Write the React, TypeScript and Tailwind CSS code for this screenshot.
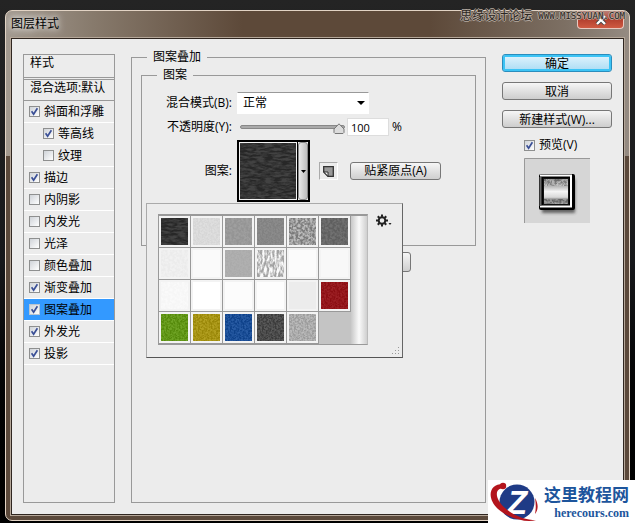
import { useState } from "react";

type Style = {
  name: string;
  checked: boolean;
  indent?: boolean;
  active?: boolean;
};

type Pattern = {
  name: string;
  fill: string;
  grain?: number; // noise opacity
  freq?: "fine" | "lines" | "cloth" | "bark";
};

const styles: Style[] = [
  { name: "斜面和浮雕", checked: true },
  { name: "等高线", checked: true, indent: true },
  { name: "纹理", checked: false, indent: true },
  { name: "描边", checked: true },
  { name: "内阴影", checked: false },
  { name: "内发光", checked: false },
  { name: "光泽", checked: false },
  { name: "颜色叠加", checked: false },
  { name: "渐变叠加", checked: true },
  { name: "图案叠加", checked: true, active: true },
  { name: "外发光", checked: true },
  { name: "投影", checked: true },
];

const patterns: Pattern[] = [
  { name: "dark-weave", fill: "#2c2c2c", grain: 0.1, freq: "lines" },
  { name: "paper-light", fill: "#dedede", grain: 0.03, freq: "fine" },
  { name: "gray-smooth", fill: "#9b9b9b", grain: 0.04, freq: "cloth" },
  { name: "gray-flat", fill: "#878787", grain: 0.04, freq: "fine" },
  { name: "gray-rough", fill: "#a4a4a4", grain: 0.25, freq: "cloth" },
  { name: "gray-dark", fill: "#666666", grain: 0.07, freq: "cloth" },
  { name: "paper-1", fill: "#f1f1f1", grain: 0.02, freq: "cloth" },
  { name: "paper-2", fill: "#fafafa" },
  { name: "gray-mid", fill: "#afafaf", grain: 0.02, freq: "fine" },
  { name: "bark", fill: "#fafafa", grain: 0.35, freq: "bark" },
  { name: "paper-3", fill: "#fbfbfb" },
  { name: "paper-4", fill: "#f8f8f8" },
  { name: "paper-5", fill: "#fafafa", grain: 0.01, freq: "cloth" },
  { name: "white-1", fill: "#ffffff" },
  { name: "white-2", fill: "#fcfcfc" },
  { name: "white-3", fill: "#fdfdfd" },
  { name: "plain", fill: "#ececec" },
  { name: "red", fill: "#960f14", grain: 0.07, freq: "fine" },
  { name: "green", fill: "#5f9a0c", grain: 0.1, freq: "fine" },
  { name: "yellow", fill: "#ab9608", grain: 0.1, freq: "fine" },
  { name: "blue", fill: "#10499a", grain: 0.1, freq: "fine" },
  { name: "charcoal", fill: "#434343", grain: 0.12, freq: "fine" },
  { name: "silver", fill: "#b2b2b2", grain: 0.12, freq: "fine" },
];

const frequencies = {
  fine: "0.55",
  lines: "0.12 0.5",
  cloth: "0.42",
  bark: "0.5 0.17",
};

const noiseIds = {
  fine: "url(#noise-fine)",
  lines: "url(#noise-lines)",
  cloth: "url(#noise-cloth)",
  bark: "url(#noise-bark)",
};

function NoiseFilters() {
  return (
    <svg width="0" height="0" className="absolute" aria-hidden="true">
      {Object.entries(frequencies).map(([key, value]) => (
        <filter key={key} id={`noise-${key}`} x="0" y="0" width="1" height="1" colorInterpolationFilters="sRGB">
          <feTurbulence type="fractalNoise" baseFrequency={value} numOctaves={3} seed={4} />
          <feColorMatrix values="3 0 0 0 -1  3 0 0 0 -1  3 0 0 0 -1  0 0 0 0 1" />
        </filter>
      ))}
    </svg>
  );
}

function Texture({ pattern, size }: { pattern: Pattern; size: number }) {
  return (
    <svg width={size} height={size} className="block" aria-hidden="true">
      <rect width={size} height={size} fill={pattern.fill} />
      {pattern.freq && (
        <rect width={size} height={size} filter={noiseIds[pattern.freq]} opacity={pattern.grain} />
      )}
    </svg>
  );
}

function Tick({ label, checked, active }: { label: string; checked: boolean; active?: boolean }) {
  return (
    <label className="flex items-center gap-1">
      <span className="grid">
        <input
          type="checkbox"
          defaultChecked={checked}
          className={`peer size-[11px] appearance-none border [grid-area:1/1] ${
            active ? "border-[#b9c4d0]" : "border-[#8e8f8f]"
          } bg-linear-to-br from-[#cfd3d8] to-white`}
        />
        <svg viewBox="0 0 11 11" className="pointer-events-none hidden size-[11px] [grid-area:1/1] peer-checked:block">
          <path d="M2.6 5.2 4.6 8.2 8.4 2.2" fill="none" stroke="#3a4f96" strokeWidth="1.7" />
        </svg>
      </span>
      {label}
    </label>
  );
}

function StyleList() {
  return (
    <aside className="w-[92px] shrink-0 border border-[#999]">
      <h2 className="h-[23px] border-b border-[#999] px-1.5 leading-4">样式</h2>
      <button className="mt-px block h-[22px] w-full border-y border-[#999] pb-1 pl-1.5 text-left leading-4 whitespace-nowrap">
        混合选项:默认
      </button>
      <ul>
        {styles.map((s) => (
          <li
            key={s.name}
            className={`flex h-[22px] items-center border-b border-white ${s.indent ? "pl-[19px]" : "pl-[5px]"} ${
              s.active ? "bg-[#3399ff]" : ""
            }`}
          >
            <Tick label={s.name} checked={s.checked} active={s.active} />
          </li>
        ))}
      </ul>
    </aside>
  );
}

function PatternPicker() {
  return (
    <div className="absolute top-full -left-[91px] mt-px flex w-[257px] items-start gap-2 border border-t-[#aaa] border-r-[#666] border-b-[#555] border-l-[#aaa] bg-[#ececec] pt-2.5 pr-2 pb-3 pl-[11px]">
      <div className="flex shrink-0 border border-t-2 border-[#999] border-r-[#bbb] bg-[#c4c4c4]">
        <div className="grid grid-cols-6 content-start">
          {patterns.map((p) => (
            <button key={p.name} aria-label={p.name} className="size-8 border-r border-b border-[#999] bg-[#f3f3f3] p-0.5">
              <Texture pattern={p} size={27} />
            </button>
          ))}
        </div>
        <div className="w-4 bg-linear-to-r from-[#c8c8c8] via-[#fafafa] to-[#cfcfcf]" />
      </div>
      <button aria-label="图案菜单" className="flex shrink-0 items-end">
        <svg width="16" height="13" viewBox="0 0 16 13">
          <circle cx="6" cy="6.5" r="3.3" fill="none" stroke="#222" strokeWidth="2" />
          {[0, 45, 90, 135, 180, 225, 270, 315].map((a) => (
            <rect key={a} x="5" y="0.5" width="2" height="2.4" fill="#222" transform={`rotate(${a} 6 6.5)`} />
          ))}
          <path d="M12.5 9h3l-1.5 2z" fill="#222" />
        </svg>
      </button>
      {/* resize grip */}
      <svg width="8" height="8" className="absolute right-0.5 bottom-0.5" fill="#999">
        <path d="M6 0h1v1h-1zM3 3h1v1h-1zM6 3h1v1h-1zM0 6h1v1h-1zM3 6h1v1h-1zM6 6h1v1h-1z" />
      </svg>
    </div>
  );
}

function OpacitySlider() {
  const [value, setValue] = useState(100);

  return (
    <div className="flex items-center">
      <div className="relative ml-[3px] flex h-4 w-[105px] items-center">
        <input
          id="opacity"
          type="range"
          value={value}
          onChange={(e) => setValue(Number(e.target.value))}
          className="h-1 w-full appearance-none rounded-full border border-[#888] bg-[#aaa] [&::-webkit-slider-thumb]:size-3 [&::-webkit-slider-thumb]:appearance-none [&::-webkit-slider-thumb]:bg-transparent"
        />
        <svg
          width="12"
          height="11"
          className="pointer-events-none absolute top-1"
          style={{ left: `${value * 0.93}px` }}
        >
          <path d="M6 .8 11 6v3.5l-1 1H2l-1-1V6z" fill="#dcdcdc" stroke="#777" />
        </svg>
      </div>
      <input
        aria-label="不透明度百分比"
        value={value}
        onChange={(e) => setValue(Number(e.target.value) || 0)}
        className="ml-0.5 h-[18px] w-[42px] border border-[#ddd] bg-white px-[3px] text-[11px]"
      />
      <span className="ml-[3px]">%</span>
    </div>
  );
}

function PatternOverlay() {
  return (
    <fieldset className="-mt-1.5 min-w-0 flex-1 border border-[#999] px-[9px]">
      <legend className="ml-1.5 px-1.5 leading-[18px]">图案叠加</legend>
      <fieldset className="min-w-0 border border-[#999] pb-[43px]">
        <legend className="ml-[15px] px-1.5 leading-[18px]">图案</legend>
        <div className="grid grid-cols-[90px_1fr] items-center gap-x-[5px] gap-y-1 pt-2 whitespace-nowrap">
          <label htmlFor="blend" className="text-right">混合模式(B):</label>
          <div className="grid w-[132px] items-center">
            <select
              id="blend"
              className="h-[22px] appearance-none border border-white border-t-[#999] bg-white px-[5px] [grid-area:1/1]"
            >
              <option>正常</option>
              <option>溶解</option>
              <option>正片叠底</option>
            </select>
            <svg width="8" height="4" className="pointer-events-none mr-1 justify-self-end [grid-area:1/1]">
              <path d="M0 0h8L4 4z" />
            </svg>
          </div>

          <label htmlFor="opacity" className="text-right">不透明度(Y):</label>
          <OpacitySlider />

          <span className="text-right">图案:</span>
          <div className="relative flex items-center">
            <button aria-label="选择图案" className="flex h-[62px] w-[73px] border-2 border-black bg-[#f4f4f4]">
              <span className="flex h-full flex-1 items-center justify-center border-r border-black">
                <Texture pattern={patterns[0]} size={56} />
              </span>
              <span className="flex h-full w-[10px] items-center justify-center rounded-[3px] border border-[#888] bg-linear-to-r from-[#e8e8e8] to-[#bdbdbd]">
                <svg width="5" height="3"><path d="M0 0h5L2.5 3z" /></svg>
              </span>
            </button>
            <button
              aria-label="新建预设"
              className="ml-[9px] flex h-[18px] w-[19px] items-center justify-center border border-white border-t-[#aaa] border-l-[#aaa]"
            >
              <svg width="11" height="11">
                <path d="M.7.7h9.6v9.6H5L.7 6z" fill="#999" stroke="#333" strokeWidth="1.3" />
                <path d="M.7 6H5v4.3z" fill="#eee" stroke="#333" />
              </svg>
            </button>
            <button className="ml-3 h-[18px] w-[91px] rounded-[3px] border border-[#777] bg-linear-to-b from-[#f6f6f6] to-[#cfcfcf] leading-4">
              贴紧原点(A)
            </button>
            <PatternPicker />
          </div>
        </div>
      </fieldset>
      <div className="mt-1.5 flex pl-[180px]">
        <button
          aria-label="复位为默认值"
          className="h-5 w-[90px] rounded-[3px] border border-[#777] bg-linear-to-b from-[#f6f6f6] to-[#cfcfcf]"
        />
      </div>
    </fieldset>
  );
}

function PreviewThumb() {
  return (
    <svg width="66" height="65" className="ml-[22px]">
      <defs>
        <linearGradient id="chrome" x2="0" y2="1">
          <stop offset="0" stopColor="#8a8a8a" />
          <stop offset="0.3" stopColor="#b8b8b8" />
          <stop offset="0.5" stopColor="#f4f4f4" />
          <stop offset="0.72" stopColor="#d8d8d8" />
          <stop offset="0.82" stopColor="#777" />
          <stop offset="1" stopColor="#999" />
        </linearGradient>
        <filter id="soft">
          <feGaussianBlur stdDeviation="1.5" />
        </filter>
      </defs>
      <rect width="66" height="65" fill="#d6d6d6" />
      <path d="M.5 65V.5H66" fill="none" stroke="#999" />
      <rect x="18" y="21" width="33" height="34" fill="#333" opacity="0.7" filter="url(#soft)" />
      <rect x="15" y="16" width="36" height="36" rx="2" fill="#000" />
      <path d="M16 17.5h32M47 17v32M16 48.5h32" stroke="#fff" strokeWidth="2" />
      <path d="M16.5 19v29" stroke="#666" strokeWidth="2" />
      <rect x="19.5" y="20.5" width="25" height="26" fill="url(#chrome)" stroke="#111" />
      <rect x="20" y="21" width="24" height="7" filter="url(#noise-cloth)" opacity="0.25" />
      <rect x="20" y="41" width="24" height="5" filter="url(#noise-cloth)" opacity="0.2" />
    </svg>
  );
}

function Actions() {
  const plain =
    "h-[18px] w-full rounded-[3px] border border-[#777] bg-linear-to-b from-[#f6f6f6] to-[#cdcdcd] pt-0.5 leading-[14px]";

  return (
    <div className="flex w-[110px] shrink-0 flex-col gap-2.5">
      <button className="h-[18px] w-full rounded-[3px] border border-[#2a8dbd] bg-linear-to-b from-[#e2f4fd] to-[#a9dcf4] pt-0.5 leading-[14px] inset-ring-2 inset-ring-[#3cc4f5]">
        确定
      </button>
      <button className={plain}>取消</button>
      <button className={plain}>新建样式(W)...</button>
      <div className="flex flex-col gap-1.5">
        <div className="ml-[22px] flex h-3.5 items-center">
          <Tick label="预览(V)" checked />
        </div>
        <PreviewThumb />
      </div>
    </div>
  );
}

function SiteLogo() {
  return (
    <a
      href="#"
      className="absolute right-0 bottom-0 flex h-[43px] w-[147px] items-center bg-white pl-0.5 text-[#1d559c]"
    >
      <svg width="54" height="42" viewBox="0 0 54 42" className="shrink-0">
        <circle cx="27" cy="21" r="17.5" fill="#1f3b86" />
        <text x="27" y="33" fontSize="33" fontWeight="bold" fontStyle="italic" fontFamily="Liberation Sans" fill="#fff" textAnchor="middle">
          Z
        </text>
        <path d="M13 3C-2 3-3 18 8 28c12 10 29 14 38 11-10 0-22-4-31-12C5 18 4 8 13 7z" fill="#b3151d" />
        <circle cx="13" cy="5" r="3.2" fill="#b3151d" />
        <path d="M45 17c4 7 3 12 0 16 1-5 1-10 0-16z" fill="#b3151d" />
      </svg>
      <span className="flex flex-col items-end pt-0.5 whitespace-nowrap">
        <span className="text-[17px] leading-5 font-bold">这里教程网</span>
        <span className="font-['Liberation_Serif',serif] text-[12px] leading-4 font-bold">herecours.com</span>
      </span>
    </a>
  );
}

export default function App() {
  return (
    <div className="relative flex min-h-screen flex-col overflow-hidden bg-linear-to-b from-[#242424] via-[#17181b] to-black px-[5px] pt-2.5 pb-0.5 font-['Open_Sans','Noto_Sans_CJK_SC',sans-serif] text-[12px] leading-4 text-black">
      <NoiseFilters />

      <div className="flex flex-1 flex-col rounded-[7px] border border-[#e2d3c4] bg-[linear-gradient(90deg,#a39a90_0%,#877a6c_14%,#5d4939_38%,#5d4939_68%,#7d7064_90%,#958b82_100%)] bg-[length:100%_145px] bg-no-repeat px-[5px] pb-[5px] [background-color:#5b493b]">
        <header className="flex h-[27px] items-start justify-between">
          <h1 className="pt-[5px] [text-shadow:0_0_6px_#fff,0_0_8px_#ddd]">图层样式</h1>
          <button
            aria-label="关闭"
            className="flex h-[18px] w-[47px] items-center justify-center rounded-b-[4px] border border-t-0 border-[#e9c9c0] bg-linear-to-b from-[#b98078] via-[#b3402f] to-[#cf5a42]"
          >
            <svg width="12" height="10" viewBox="0 0 12 10">
              <path d="M2 1l8 8M10 1L2 9" stroke="#444" strokeWidth="4" />
              <path d="M2 1l8 8M10 1L2 9" stroke="#fff" strokeWidth="2.4" />
            </svg>
          </button>
        </header>

        <main className="flex flex-1 gap-4 border border-[#2f2620] bg-[#ececec] px-[11px] pt-[15px] pb-[11px] outline outline-[#b5a799]">
          <StyleList />
          <PatternOverlay />
          <Actions />
        </main>
      </div>

      <div className="pointer-events-none absolute top-2 right-2.5 flex items-center gap-1.5 whitespace-nowrap text-[#2c2622] [text-shadow:1px_0_#b5aaa0,-1px_0_#b5aaa0,0_1px_#b5aaa0,0_-1px_#b5aaa0]">
        <span>思缘设计论坛</span>
        <span className="font-['DejaVu_Sans_Mono',monospace] text-[9px]">WWW.MISSYUAN.COM</span>
      </div>
      <SiteLogo />
    </div>
  );
}
